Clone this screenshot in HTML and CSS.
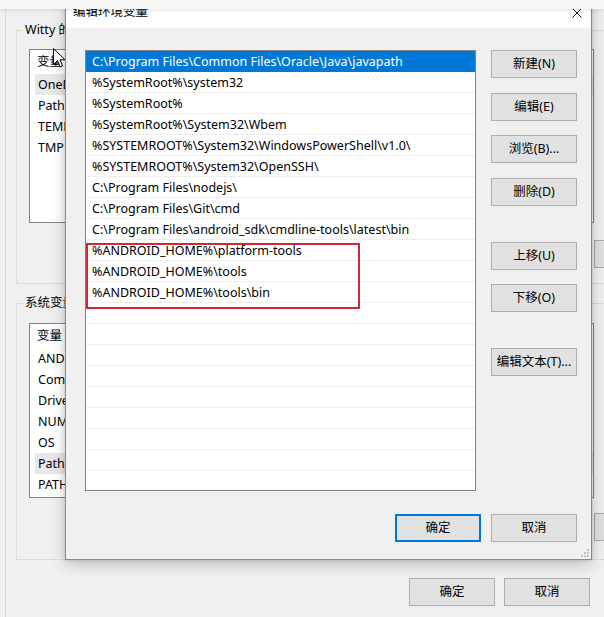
FILE: index.html
```html
<!DOCTYPE html>
<html lang="zh-CN">
<head>
<meta charset="utf-8">
<title>编辑环境变量</title>
<link rel="stylesheet" href="styles.css">
</head>
<body>
<div class="desktop">
  <div class="bgwin">
    <fieldset class="group g1">
      <legend>Witty 的用户变量(U)</legend>
      <div class="bglist l1">
        <div class="bghead">变量</div>
        <div class="bgrow hl">OneDrive</div>
        <div class="bgrow">Path</div>
        <div class="bgrow">TEMP</div>
        <div class="bgrow">TMP</div>
      </div>
      <div class="bgbtns b1"><button class="btn" aria-label="新建"></button></div>
    </fieldset>
    <fieldset class="group g2">
      <legend>系统变量(S)</legend>
      <div class="bglist l2">
        <div class="bghead">变量</div>
        <div class="bgrow">ANDROID_HOME</div>
        <div class="bgrow">ComSpec</div>
        <div class="bgrow">DriverData</div>
        <div class="bgrow">NUMBER_OF_PROCESSORS</div>
        <div class="bgrow">OS</div>
        <div class="bgrow hl">Path</div>
        <div class="bgrow">PATHEXT</div>
      </div>
      <div class="bgbtns b2"><button class="btn" aria-label="新建"></button></div>
    </fieldset>
    <div class="bgfooter">
      <button class="btn">确定</button>
      <button class="btn">取消</button>
    </div>
  </div>

  <div class="dialog">
    <div class="titlebar">
      <span class="title">编辑环境变量</span>
      <svg class="close" width="10" height="10" viewBox="0 0 10 10"><path d="M0.5 0.5 L9.5 9.5 M9.5 0.5 L0.5 9.5" stroke="#111" stroke-width="1" fill="none"/></svg>
    </div>
    <div class="dbody">
      <div class="main">
        <div class="list">
          <div class="row sel">C:\Program Files\Common Files\Oracle\Java\javapath</div>
          <div class="row">%SystemRoot%\system32</div>
          <div class="row">%SystemRoot%</div>
          <div class="row">%SystemRoot%\System32\Wbem</div>
          <div class="row">%SYSTEMROOT%\System32\WindowsPowerShell\v1.0\</div>
          <div class="row">%SYSTEMROOT%\System32\OpenSSH\</div>
          <div class="row">C:\Program Files\nodejs\</div>
          <div class="row">C:\Program Files\Git\cmd</div>
          <div class="row">C:\Program Files\android_sdk\cmdline-tools\latest\bin</div>
          <div class="row">%ANDROID_HOME%\platform-tools</div>
          <div class="row">%ANDROID_HOME%\tools</div>
          <div class="row">%ANDROID_HOME%\tools\bin</div>
          <div class="mark"></div>
        </div>
        <div class="btncol">
          <button class="btn">新建(N)</button>
          <button class="btn m15">编辑(E)</button>
          <button class="btn m14">浏览(B)...</button>
          <button class="btn m15">删除(D)</button>
          <button class="btn m36">上移(U)</button>
          <button class="btn m14">下移(O)</button>
          <button class="btn m36">编辑文本(T)...</button>
        </div>
      </div>
      <div class="footer">
        <button class="btn focus">确定</button>
        <button class="btn">取消</button>
      </div>
    </div>
    <svg class="grip" width="8" height="8" viewBox="0 0 8 8">
      <rect x="6" y="0" width="2" height="2" fill="#c4c4c4"/>
      <rect x="3" y="3" width="2" height="2" fill="#c4c4c4"/>
      <rect x="6" y="3" width="2" height="2" fill="#c4c4c4"/>
      <rect x="0" y="6" width="2" height="2" fill="#c4c4c4"/>
      <rect x="3" y="6" width="2" height="2" fill="#c4c4c4"/>
      <rect x="6" y="6" width="2" height="2" fill="#c4c4c4"/>
    </svg>
  </div>

  <div class="topstrip"></div>

  <svg class="cursor" width="13" height="20" viewBox="0 0 13 20">
    <path d="M0.5 0.5 L0.5 16.5 L4.5 12.7 L7.2 19 L9.6 18 L7 11.8 L12 11.8 Z" fill="#fff" stroke="#000" stroke-width="1" stroke-linejoin="miter"/>
  </svg>
</div>
</body>
</html>
```

FILE: styles.css
```css
* { box-sizing: border-box; }
html, body { margin: 0; padding: 0; }
body { background: #f0f0f0; }

.desktop {
  position: relative;
  width: 604px;
  height: 617px;
  overflow: hidden;
  background: #f0f0f0;
  font-family: "Noto Sans", "Noto Sans CJK SC", sans-serif;
  font-size: 12.5px;
  color: #000;
}

/* background window */
.bgwin {
  margin-left: 5px;
  border-left: 1px solid #dadada;
  height: 617px;
  padding-top: 22px;
}
.group {
  margin: 0 0 0 10px;
  padding: 0;
  border: 1px solid #dcdcdc;
  width: 620px;
  min-width: 0;
}
.group legend {
  margin-left: 6px;
  padding: 0 2px;
  line-height: 16px;
  font-size: 12.5px;
}
.g1 { height: 262px; }
.g2 { height: 265px; margin-top: 11px; }
.bglist {
  margin-left: 12px;
  width: 565px;
  background: #fff;
  border: 1px solid #828282;
}
.l1 { margin-top: 11px; height: 174px; }
.l2 { margin-top: 12px; height: 175px; }
.bghead {
  height: 24px;
  line-height: 24px;
  padding-left: 7px;
}
.bgrow {
  height: 21px;
  line-height: 21px;
  margin-left: 5px;
  padding-left: 3px;
  white-space: nowrap;
}
.bgrow.hl { background: #e8e8e8; }
.bgbtns { padding-left: 577px; }
.b1 { margin-top: 17px; }
.b2 { margin-top: 15px; }
.bgfooter {
  display: flex;
  justify-content: flex-end;
  gap: 9px;
  margin-top: 18px;
  padding-right: 14px;
}

/* buttons */
.btn {
  display: block;
  width: 86px;
  height: 28px;
  padding: 0;
  background: #e1e1e1;
  border: 1px solid #adadad;
  font-family: "Noto Sans", "Noto Sans CJK SC", sans-serif;
  font-size: 12.5px;
  color: #000;
  line-height: 26px;
}
.btn.focus { border: 2px solid #0078d7; line-height: 24px; }

/* dialog */
.dialog {
  position: absolute;
  left: 65px;
  top: 0;
  width: 527px;
  height: 560px;
  background: #f0f0f0;
  border: 1px solid #8a8a8a;
  border-top: none;
  box-shadow: 0 4px 14px rgba(0, 0, 0, 0.22), 0 0 4px rgba(0, 0, 0, 0.12);
}
.titlebar {
  height: 28px;
  background: #fff;
  display: flex;
  justify-content: space-between;
  align-items: flex-start;
  padding: 4px 9px 0 7px;
}
.title { line-height: 16px; font-size: 12.5px; }
.close { margin-top: 4px; }
.dbody { padding: 22px 14px 0 19px; }
.main { display: flex; gap: 15px; align-items: flex-start; }
.list {
  position: relative;
  width: 391px;
  height: 441px;
  border: 1px solid #828282;
  background: repeating-linear-gradient(to bottom, #fff 0, #fff 20px, #eeeeee 20px, #eeeeee 21px);
}
.row {
  height: 21px;
  line-height: 21px;
  padding-left: 6px;
  white-space: nowrap;
}
.row.sel { background: #0078d7; color: #fff; }
.mark {
  position: absolute;
  left: 0;
  top: 192px;
  width: 274px;
  height: 66px;
  border: 2px solid #cc2b36;
}
.btncol { display: flex; flex-direction: column; }
.m14 { margin-top: 14px; }
.m15 { margin-top: 15px; }
.m36 { margin-top: 36px; }
.footer {
  display: flex;
  justify-content: flex-end;
  gap: 10px;
  margin-top: 23px;
}
.grip { position: absolute; right: 2px; bottom: 2px; }

.topstrip {
  position: absolute;
  left: 0;
  top: 0;
  width: 604px;
  height: 9px;
  background: #f8f8f8;
  box-shadow: 0 1px 4px rgba(0, 0, 0, 0.12);
}
.cursor { position: absolute; left: 53px; top: 48px; }
```
